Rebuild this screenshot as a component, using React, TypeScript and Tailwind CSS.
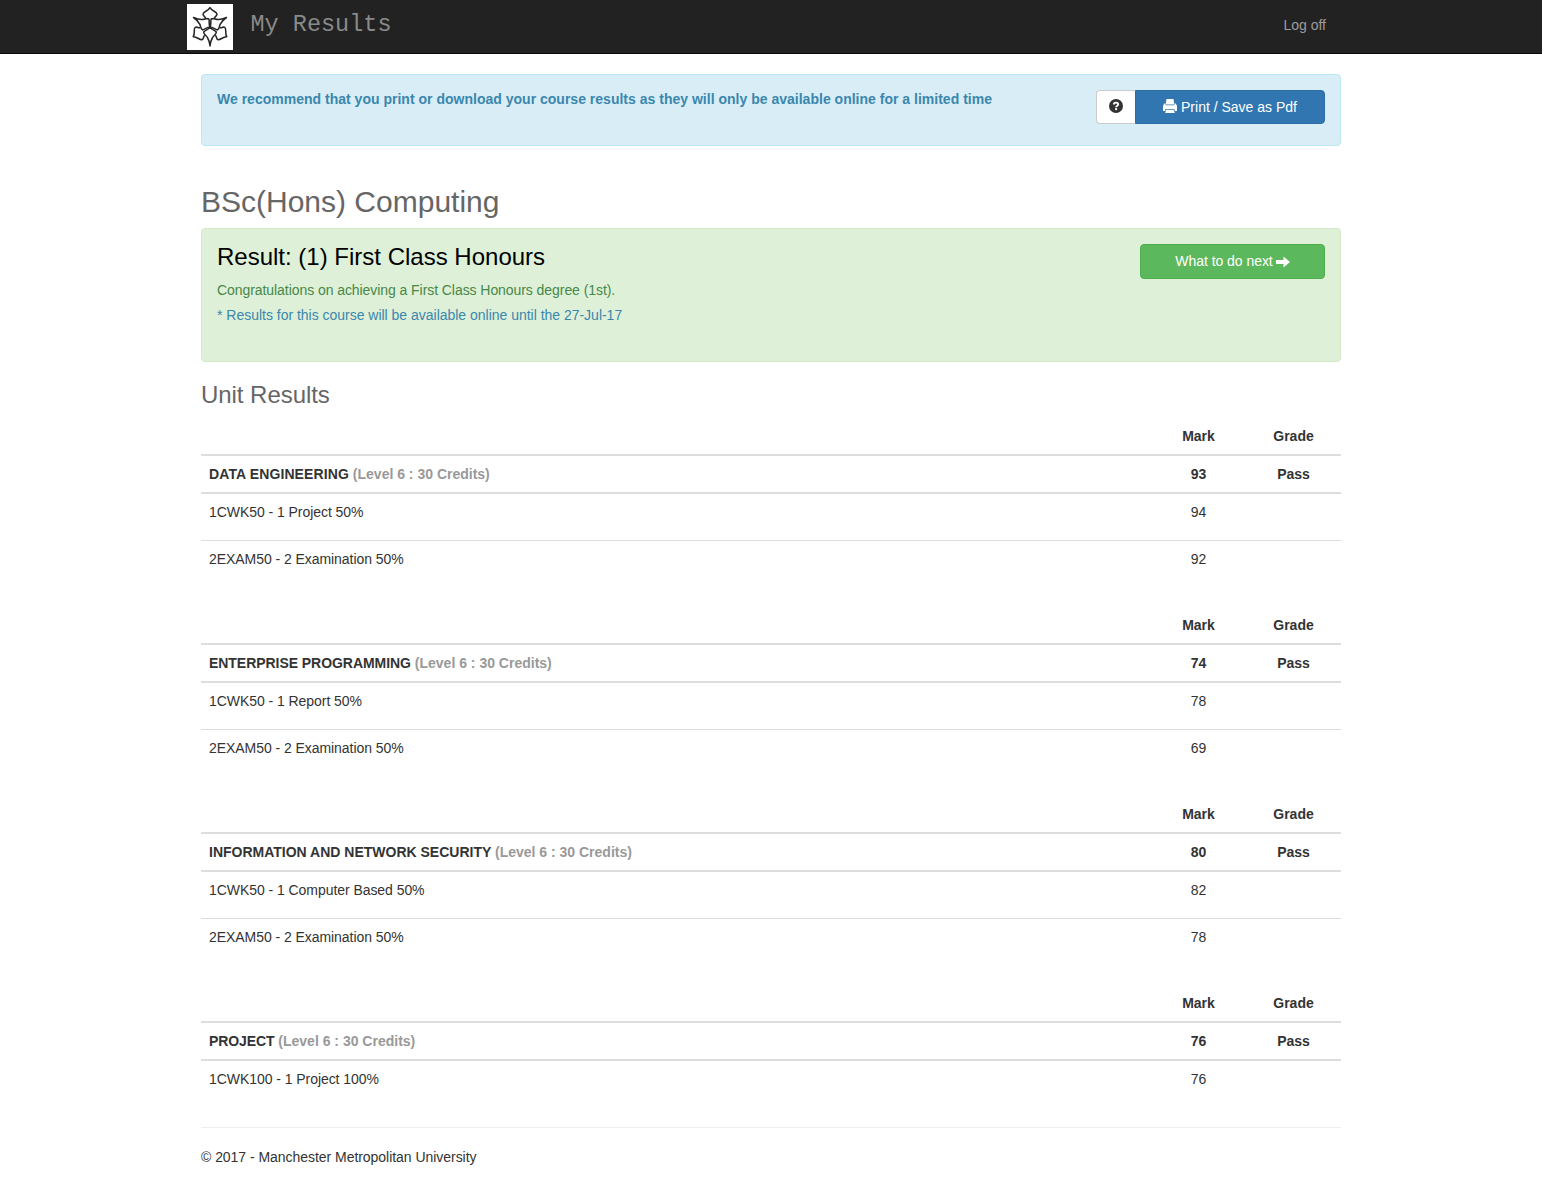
import React from "react";

type Item = { name: string; mark: number };
type Unit = { title: string; titleClass: string; level: string; mark: number; items: Item[] };

const units: Unit[] = [
  {
    title: "DATA ENGINEERING", titleClass: "tracking-[0.11px]", level: "(Level 6 : 30 Credits)", mark: 93,
    items: [{ name: "1CWK50 - 1 Project 50%", mark: 94 }, { name: "2EXAM50 - 2 Examination 50%", mark: 92 }],
  },
  {
    title: "ENTERPRISE PROGRAMMING", titleClass: "tracking-[-0.05px]", level: "(Level 6 : 30 Credits)", mark: 74,
    items: [{ name: "1CWK50 - 1 Report 50%", mark: 78 }, { name: "2EXAM50 - 2 Examination 50%", mark: 69 }],
  },
  {
    title: "INFORMATION AND NETWORK SECURITY", titleClass: "", level: "(Level 6 : 30 Credits)", mark: 80,
    items: [{ name: "1CWK50 - 1 Computer Based 50%", mark: 82 }, { name: "2EXAM50 - 2 Examination 50%", mark: 78 }],
  },
  {
    title: "PROJECT", titleClass: "tracking-[-0.1px]", level: "(Level 6 : 30 Credits)", mark: 76,
    items: [{ name: "1CWK100 - 1 Project 100%", mark: 76 }],
  },
];

function Logo() {
  return (
    <svg viewBox="0 0 138 138" className="h-[46px] w-[46px] bg-white" fill="none" stroke="#262626" strokeWidth="4.6" strokeLinejoin="round">
      {[0, 120, 240].map((angle) => (
        <g key={angle} transform={`translate(69 69) rotate(${angle})`}>
          <path d="M0 0C-4 8 -13 8 -19 15C-18 25 -10 25 -7 33C-3 40 -1 46 0 57C1 46 3 40 7 33C10 25 18 25 19 15C13 8 4 8 0 0" />
          <path d="M-14 -26C-13 -32 -21 -32 -21 -39C-20 -47 -6 -47 0 -58C6 -47 20 -47 21 -39C21 -32 13 -32 14 -26" />
        </g>
      ))}
    </svg>
  );
}

function QuestionIcon() {
  return (
    <svg viewBox="0 0 14 14" className="relative -top-px h-[14px] w-[14px]">
      <circle cx="7" cy="7" r="7" fill="#333" />
      <path d="M4.900 5.400C4.900 3 9.200 3 9.200 5.300C9.200 6.700 7.100 6.700 7.100 8.300" fill="none" stroke="#fff" strokeWidth="1.900" />
      <path d="M6.100 9.200h2v1.900h-2z" fill="#fff" />
    </svg>
  );
}

function PrintIcon() {
  return (
    <svg viewBox="0 0 14 14" className="relative -top-px h-[14px] w-[14px]" fill="currentColor">
      <path d="M3.500 0h7l.8 5.500H2.700z" />
      <path d="M1.200 4.500h1.300V6.300h9V4.500h1.300L14 7v5h-2l-.6-2H2.600L2 12H0V7z" />
      <path d="M3 10.800h8l.8 3.200H2.200z" />
    </svg>
  );
}

function ArrowIcon() {
  return (
    <svg viewBox="0 0 14 14" className="h-[14px] w-[14px]" fill="currentColor">
      <path d="M0 5h7.500V1.400L14 7 7.500 12.600V9H0z" />
    </svg>
  );
}

const cols = "grid grid-cols-[1fr_95px_95px]";

function UnitTable({ unit }: { unit: Unit }) {
  return (
    <section className="mb-5">
      <div className={cols + " h-[38px] border-b-2 border-[#ddd] py-2 text-center font-bold"}>
        <span />
        <span>Mark</span>
        <span>Grade</span>
      </div>
      <div className={cols + " h-[38px] border-b-2 border-[#ddd] py-2 text-center font-bold"}>
        <div className="pl-2 text-left whitespace-pre">
          <span className={unit.titleClass}>{unit.title}</span>
          <span className="text-[#999]"> {unit.level}</span>
        </div>
        <span>{unit.mark}</span>
        <span>Pass</span>
      </div>
      <div className="divide-y divide-[#ddd]">
        {unit.items.map((it) => (
          <div key={it.name} className={cols + " box-content h-[30px] py-2 text-center"}>
            <span className="pl-2 text-left tracking-[-0.055px]">{it.name}</span>
            <span>{it.mark}</span>
          </div>
        ))}
      </div>
    </section>
  );
}

export default function App() {
  return (
    <div className="min-h-[1198px] bg-white font-['Liberation_Sans',Arial,sans-serif] text-[14px] leading-5 text-[#333]">
      <nav className="h-[54px] border-b border-[#080808] bg-[#222]">
        <div className="mx-auto flex w-[1168px] justify-between pt-1">
          <div className="flex">
            <Logo />
            <span className="ml-[17.500px] pt-[11px] font-['Liberation_Mono',monospace] text-[23.5px] leading-5 text-[#8a8a8a]">My Results</span>
          </div>
          <span className="mr-[29px] pt-[11px] text-[#9d9d9d]">Log off</span>
        </div>
      </nav>
      <main className="mx-auto w-[1140px] pt-5">
        <div className="flex h-[72px] items-start justify-between rounded border border-[#bce8f1] bg-[#d9edf7] px-[15px] pt-[15px]">
          <strong className="-mt-px tracking-[0.01px] text-[#3a87ad]">We recommend that you print or download your course results as they will only be available online for a limited time</strong>
          <div className="flex h-[34px]">
            <button className="flex w-[39px] items-center justify-center rounded-l border border-r-0 border-[#ccc] bg-white">
              <QuestionIcon />
            </button>
            <button className="flex w-[190px] items-center justify-center gap-1 rounded-r border border-[#2e6da4] bg-[#3276b1] text-white">
              <PrintIcon />
              Print / Save as Pdf
            </button>
          </div>
        </div>
        <h1 className="mt-[39px] mb-[10px] text-[30px] leading-[33px] text-[#666]">BSc(Hons) Computing</h1>
        <div className="flex h-[134px] items-start justify-between rounded border border-[#d6e9c6] bg-[#dff0d8] px-[15px] pt-[15px]">
          <div>
            <h2 className="text-[24px] leading-[26px] text-black">Result: (1) First Class Honours</h2>
            <p className="mt-[10px] tracking-[-0.065px] text-[#468847]">Congratulations on achieving a First Class Honours degree (1st).</p>
            <p className="mt-[5px] tracking-[-0.015px] text-[#3a87ad]">* Results for this course will be available online until the 27-Jul-17</p>
          </div>
          <button className="flex h-[35px] w-[185px] items-center justify-center gap-[3px] rounded border border-[#4cae4c] bg-[#5cb85c] text-white">
            <span className="-mt-px tracking-[-0.04px]">What to do next</span>
            <ArrowIcon />
          </button>
        </div>
        <h2 className="mt-5 mb-[10px] text-[24px] leading-[26px] tracking-[-0.05px] text-[#666]">Unit Results</h2>
        {units.map((u) => (
          <UnitTable key={u.title} unit={u} />
        ))}
        <footer className="border-t border-[#eee] pt-[19px] tracking-[-0.04px]">© 2017 - Manchester Metropolitan University</footer>
      </main>
    </div>
  );
}
